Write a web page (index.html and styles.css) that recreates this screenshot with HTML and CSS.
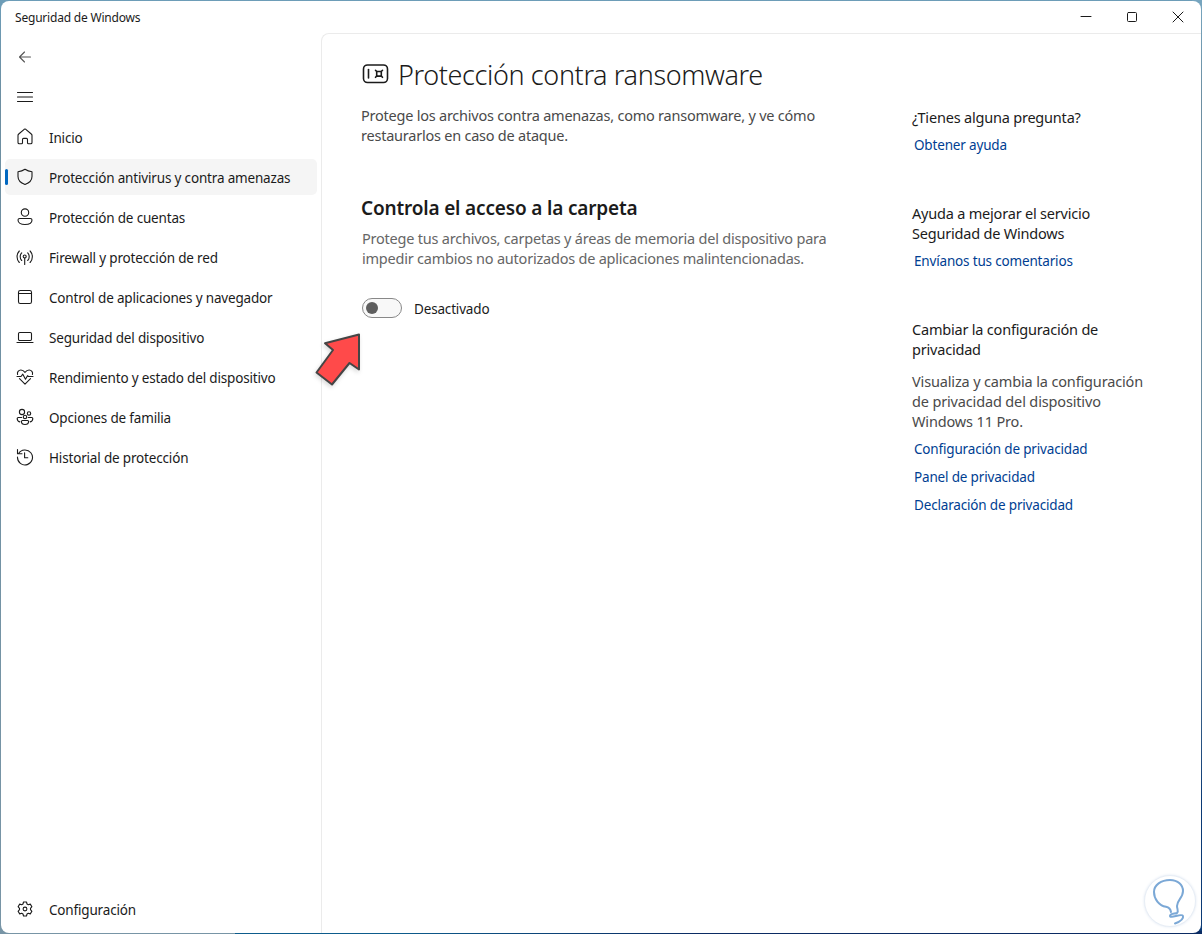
FILE: index.html
```html
<!DOCTYPE html>
<html lang="es">
<head>
    <meta charset="UTF-8">
    <meta name="viewport" content="width=device-width, initial-scale=1.0">
    <title>Seguridad de Windows</title>
    <link rel="stylesheet" href="styles.css">
</head>
<body>
    <div class="window">
        <header class="titlebar">
            <span class="app-name">Seguridad de Windows</span>
            <div class="window-controls">
                <button aria-label="Minimizar"><svg width="12" height="12" viewBox="0 0 12 12"><path d="M1 5.5h10"/></svg></button>
                <button aria-label="Maximizar"><svg width="12" height="12" viewBox="0 0 12 12"><rect x="1.5" y="1.5" width="9" height="9" rx="1"/></svg></button>
                <button aria-label="Cerrar"><svg width="12" height="12" viewBox="0 0 12 12"><path d="M1 1l10 10M11 1L1 11"/></svg></button>
            </div>
        </header>

        <div class="main">
            <!-- Sidebar -->
            <nav class="sidebar">
                <a class="nav-item back"><svg class="icon" viewBox="0 0 18 18"><path d="M14.5 9h-11M8.500 4l-5 5 5 5"/></svg></a>
                <a class="nav-item"><svg class="icon" viewBox="0 0 18 18"><path d="M1.5 4.5h15M1.5 9h15M1.5 13.5h15"/></svg></a>
                <a class="nav-item">
                    <svg class="icon" viewBox="0 0 18 18"><path d="M2 7.4c0-.6.2-1 .7-1.4l5.500-4.700c.5-.4 1.100-.4 1.600 0L15.300 6c.5.4.7.8.7 1.400v7.100c0 .8-.5 1.300-1.300 1.300h-2.200c-.7 0-1-.4-1-1v-3.300c0-.7-.4-1.100-1.100-1.100H7.600c-.7 0-1.100.4-1.100 1.100v3.300c0 .6-.3 1-1 1H3.300c-.8 0-1.300-.5-1.300-1.300z"/></svg>
                    <span>Inicio</span>
                </a>
                <a class="nav-item active">
                    <svg class="icon" viewBox="0 0 18 18"><path d="M9 1.3c2 1.4 4.300 2.200 7 2.400v4.800c0 3.700-2.300 6.300-7 8-4.700-1.700-7-4.300-7-8V3.700c2.700-.2 5-1 7-2.400z"/></svg>
                    <span>Protección antivirus y contra amenazas</span>
                </a>
                <a class="nav-item">
                    <svg class="icon" viewBox="0 0 18 18"><circle cx="9" cy="4.6" r="3.7"/><path d="M3.700 10.500h10.600c1 0 1.700.6 1.700 1.500 0 2.700-2.800 4.500-7 4.500s-7-1.800-7-4.500c0-.9.700-1.500 1.700-1.500z"/></svg>
                    <span>Protección de cuentas</span>
                </a>
                <a class="nav-item">
                    <svg class="icon" viewBox="0 0 18 18"><path d="M3.300 3C.3 6.200.3 11.300 3.300 14.500M14.100 3c3 3.200 3 8.300 0 11.500M5.700 4.900c-2 2-2 5.600 0 7.600M11.700 4.900c2 2 2 5.600 0 7.600M8.700 10v6.500"/><circle cx="8.7" cy="8.5" r="1.5"/></svg>
                    <span>Firewall y protección de red</span>
                </a>
                <a class="nav-item">
                    <svg class="icon" viewBox="0 0 18 18"><rect x="2.5" y="2.5" width="13" height="13" rx="1.8"/><path d="M2.500 5.500h13"/></svg>
                    <span>Control de aplicaciones y navegador</span>
                </a>
                <a class="nav-item">
                    <svg class="icon" viewBox="0 0 18 18"><rect x="2.5" y="4.5" width="13" height="8" rx="1.2"/><path d="M1 14.500h16"/></svg>
                    <span>Seguridad del dispositivo</span>
                </a>
                <a class="nav-item">
                    <svg class="icon" viewBox="0 0 18 18"><path d="M1.600 6.500C.8 4.200 2.600 2 4.900 2 6.600 2 8 3 9 4.300 10 3 11.400 2 13.100 2c2.300 0 4.100 2.200 3.300 4.500M3.500 10.700L9 16.200l5.500-5.500M1 8.500h4l1.800-2.300 2.700 5 2-3.500 1 .8H17"/></svg>
                    <span>Rendimiento y estado del dispositivo</span>
                </a>
                <a class="nav-item">
                    <svg class="icon" viewBox="0 0 18 18"><circle cx="6" cy="4" r="2.6"/><circle cx="13" cy="5.5" r="1.7"/><circle cx="9" cy="9" r="1.7"/><path d="M5.700 9.500H2.200c-.6 0-1 .4-1 1 0 1.700 1 3 2.600 3.400M12.200 9.500h3.600c.6 0 1 .4 1 1 0 1.800-1 3-2.600 3.400M6.400 12.500h5.200c.6 0 1 .4 1 1 0 1.800-1.500 3-3.600 3s-3.600-1.200-3.600-3c0-.6.4-1 1-1z"/></svg>
                    <span>Opciones de familia</span>
                </a>
                <a class="nav-item">
                    <svg class="icon" viewBox="0 0 18 18"><path d="M2.500 5.700A7.500 7.500 0 1 1 1.500 9M1.500 1.500v4.300h4.500M8.600 4.800v5h3.200"/></svg>
                    <span>Historial de protección</span>
                </a>
                <a class="nav-item settings">
                    <svg class="icon" viewBox="0 0 18 18"><circle cx="9" cy="9" r="1.9"/><path d="M7.500 2h3l.5 2 1.300.7 2-.6 1.600 2.600-1.400 1.600v1.400l1.400 1.600-1.600 2.600-2-.6-1.300.7-.5 2h-3l-.5-2-1.300-.7-2 .6-1.600-2.600 1.400-1.600V8.300L2.100 6.700l1.600-2.600 2 .6L7 4z"/></svg>
                    <span>Configuración</span>
                </a>
            </nav>

            <!-- Page content -->
            <main class="content">
                <section class="page">
                    <div class="page-title">
                        <svg width="28" height="20" viewBox="0 0 28 20"><rect x="2.5" y="1" width="24" height="17.5" rx="4"/><path d="M7.500 5.500v8.500"/><rect x="15.7" y="7.5" width="4.600" height="4.600"/><path d="M14.500 6.300l1.200 1.200M21.500 6.300l-1.200 1.200M14.500 13.300l1.200-1.200M21.500 13.300l-1.200-1.200"/></svg>
                        <h1>Protección contra ransomware</h1>
                    </div>
                    <p class="intro">Protege los archivos contra amenazas, como ransomware, y ve cómo<br>restaurarlos en caso de ataque.</p>

                    <h2>Controla el acceso a la carpeta</h2>
                    <p class="description">Protege tus archivos, carpetas y áreas de memoria del dispositivo para<br>impedir cambios no autorizados de aplicaciones malintencionadas.</p>
                    <div class="toggle-row">
                        <button class="toggle" role="switch" aria-checked="false" aria-label="Controla el acceso a la carpeta"><span class="knob"></span></button>
                        <span class="toggle-label">Desactivado</span>
                    </div>
                </section>

                <aside class="help">
                    <section>
                        <h3>¿Tienes alguna pregunta?</h3>
                        <a>Obtener ayuda</a>
                    </section>
                    <section>
                        <h3>Ayuda a mejorar el servicio<br>Seguridad de Windows</h3>
                        <a>Envíanos tus comentarios</a>
                    </section>
                    <section>
                        <h3>Cambiar la configuración de<br>privacidad</h3>
                        <p>Visualiza y cambia la configuración<br>de privacidad del dispositivo<br>Windows 11 Pro.</p>
                        <a>Configuración de privacidad</a>
                        <a>Panel de privacidad</a>
                        <a>Declaración de privacidad</a>
                    </section>
                </aside>
            </main>
        </div>
    </div>

    <svg class="pointer" width="50" height="56" viewBox="0 0 50 56"><path d="M46 4.500L12 13.200 20 20 3.500 42.500 19 54.500 36.500 33 46 39.500z"/></svg>
    <div class="badge">
        <svg width="50" height="50" viewBox="0 0 50 50"><path d="M26 36c-.5-3-2-4.500-5-5.200C14 29.500 9 23 9 16 9 9 16 4 25 4c8 0 13 5 13 11 0 7-6 9-6 15 0 3 2 5 0 7-2 1-7 0-7 3 0 3 12-3 13 0 1 4-4 6-8 7.500"/></svg>
    </div>
</body>
</html>
```
FILE: styles.css
```css
* {
    box-sizing: border-box;
    margin: 0;
    padding: 0;
}

body {
    height: 934px;
    padding: 1px 1px 2px;
    overflow: hidden;
    font-family: 'Noto Sans', 'Open Sans', sans-serif;
    font-size: 13.5px;
    letter-spacing: -0.17px;
    color: #1b1b1b;
    background:
        linear-gradient(90deg, #7895a6 0 235px, #0d5c8c 235px 400px, #0b2b63 700px) bottom / 100% 3px no-repeat,
        linear-gradient(#76a5bf, #6d8fa2 100px, #6d8fa2 600px, #0b3a75 800px) right / 10px 100% no-repeat,
        linear-gradient(#6d9db8, #6d8fa2 100px, #7895a6);
}

svg {
    display: block;
    flex: none;
    fill: none;
    stroke: #1b1b1b;
    stroke-linecap: round;
    stroke-linejoin: round;
}

button {
    border: none;
    background: none;
}

.window {
    display: flex;
    flex-direction: column;
    height: 932px;
    background: #fff;
    border-radius: 8px;
    overflow: hidden;
}

.titlebar {
    display: flex;
    justify-content: space-between;
    height: 32px;
    padding-left: 14px;
}

.app-name {
    font-size: 12px;
    line-height: 34px;
    letter-spacing: -0.2px;
}

.window-controls {
    display: flex;
}

.window-controls button {
    display: flex;
    align-items: center;
    justify-content: center;
    width: 46px;
}

.main {
    display: flex;
    flex: 1;
}

/* Sidebar */
.sidebar {
    display: flex;
    flex-direction: column;
    gap: 4px;
    width: 320px;
    padding: 6px 4px;
}

.nav-item {
    display: flex;
    align-items: center;
    gap: 15px;
    height: 36px;
    padding-left: 11px;
    border-radius: 5px;
    line-height: 20px;
}

.nav-item span {
    padding-top: 2px;
}

.nav-item .icon {
    width: 18px;
    height: 18px;
    stroke-width: 1.1;
}

.nav-item.active {
    background: #f5f5f5;
}

.nav-item.active::before {
    content: '';
    width: 3px;
    height: 16px;
    margin: 0 -7px 0 -11px;
    border-radius: 2px;
    background: #0067c0;
}

.nav-item.back .icon {
    stroke: #555;
}

.settings {
    margin-top: auto;
}

/* Content */
.content {
    display: flex;
    flex: 1;
    border-top: 1px solid #ebebeb;
    border-left: 1px solid #ebebeb;
    border-top-left-radius: 8px;
}

.page {
    width: 590px;
    padding: 21px 0 0 39px;
}

.page-title {
    display: flex;
    align-items: center;
    gap: 9px;
    height: 40px;
}

.page-title svg {
    margin-bottom: 2px;
    stroke-width: 1.6;
}

h1 {
    font-size: 27px;
    font-weight: 300;
    line-height: 40px;
    letter-spacing: -0.38px;
    white-space: nowrap;
}

.intro {
    margin-top: 10px;
    font-size: 14.5px;
    line-height: 20px;
    letter-spacing: -0.23px;
    color: #4a4a4a;
    white-space: nowrap;
}

h2 {
    margin-top: 49px;
    font-size: 19px;
    font-weight: 600;
    line-height: 28px;
    letter-spacing: -0.17px;
    white-space: nowrap;
}

.description {
    margin-top: 6px;
    padding-left: 1px;
    font-size: 14.5px;
    line-height: 20px;
    letter-spacing: -0.22px;
    color: #666;
    white-space: nowrap;
}

.toggle-row {
    display: flex;
    align-items: center;
    gap: 12px;
    margin-top: 29px;
    padding-left: 1px;
}

.toggle {
    display: flex;
    align-items: center;
    width: 40px;
    height: 20px;
    padding-left: 3px;
    border: 1px solid #888;
    border-radius: 10px;
    background: #f8f8f8;
}

.knob {
    width: 12px;
    height: 12px;
    border-radius: 50%;
    background: #5e5e5e;
}

.toggle-label {
    padding-top: 2px;
    line-height: 20px;
}

/* Help column */
.help {
    display: flex;
    flex-direction: column;
    gap: 48px;
    padding-top: 73px;
    white-space: nowrap;
}

.help h3 {
    font-size: 14.5px;
    font-weight: 400;
    line-height: 20px;
    letter-spacing: -0.2px;
}

.help p {
    margin-top: 12px;
    font-size: 14.5px;
    line-height: 20px;
    letter-spacing: -0.15px;
    color: #4a4a4a;
}

.help a {
    display: block;
    margin-top: 8px;
    padding-left: 2px;
    line-height: 20px;
    color: #003e92;
}

.pointer {
    position: absolute;
    left: 313px;
    top: 330px;
    fill: #ff4a4a;
    stroke: #454545;
    stroke-width: 2;
    filter: drop-shadow(-1px 2px 2px rgba(0,0,0,0.15));
}

.badge {
    position: absolute;
    left: 1144px;
    top: 875px;
    width: 52px;
    height: 52px;
    border: 1px solid #e8eef6;
    border-radius: 50%;
    background: #fff;
    box-shadow: 0 0 3px #e0e8f3;
}

.badge svg {
    stroke: #7ba8d6;
    stroke-width: 2;
}
```
